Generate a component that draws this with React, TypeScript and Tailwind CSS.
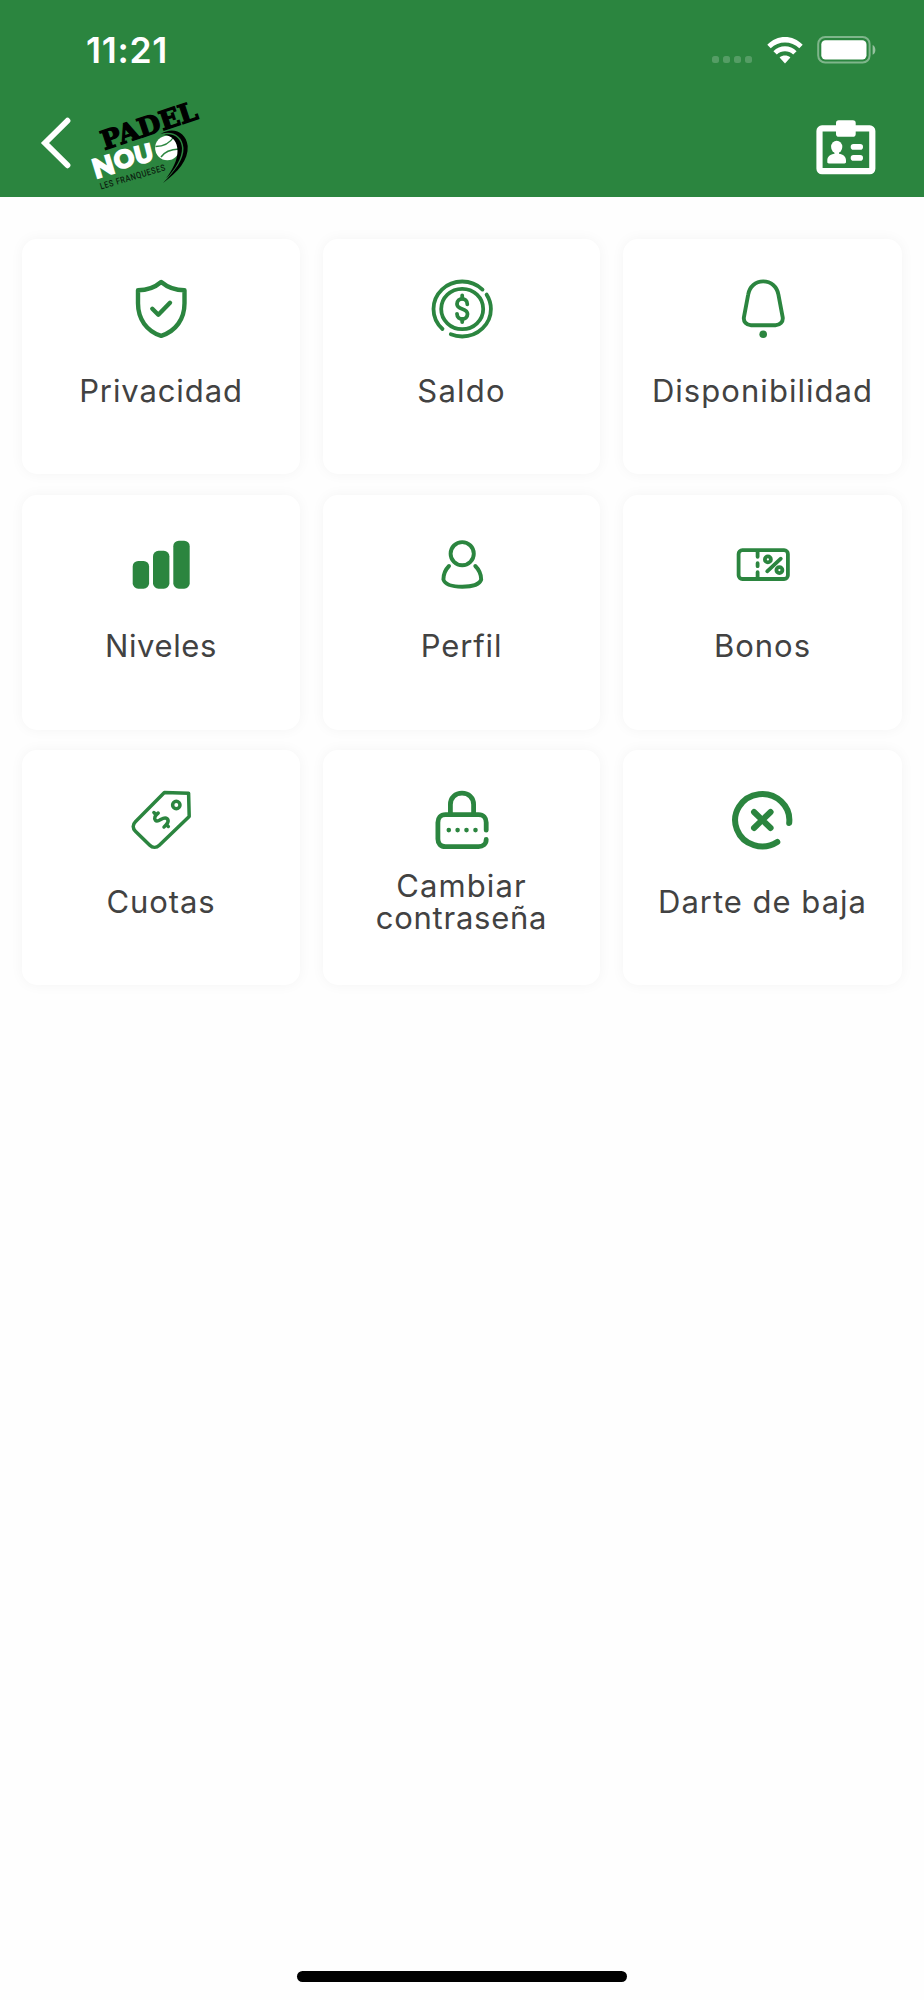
import React from "react";

interface MenuItem {
    label: string;
    lines: { text: string; tracking: string }[];
    icon: React.ReactNode;
}

interface IconProps {
    children: React.ReactNode;
    stroke?: number;
}

const Icon: React.FC<IconProps> = ({ children, stroke = 3.9 }) => (
    <svg
        width="60"
        height="60"
        viewBox="0 0 60 60"
        fill="none"
        stroke="currentColor"
        strokeWidth={stroke}
        strokeLinecap="round"
        strokeLinejoin="round"
        className="overflow-visible"
    >
        {children}
    </svg>
);

const menuItems: MenuItem[] = [
    {
        label: "Privacidad",
        lines: [{ text: "Privacidad", tracking: "tracking-[0.9px]" }],
        icon: (
            <Icon stroke={4.4}>
                <path d="M30.2 3C24 8.3 16.5 11.3 7 11.3V24.3C7 40 15.5 52 30.2 56.9C45 52 53.5 40 53.5 24.3V11.3C44 11.3 36.5 8.3 30.2 3Z" />
                <path d="M21.3 29.8L27.3 35.7L39 23.8" />
            </Icon>
        ),
    },
    {
        label: "Saldo",
        lines: [{ text: "Saldo", tracking: "tracking-[1.2px]" }],
        icon: (
            <Icon stroke={3.8}>
                <path d="M10.5 50A28.7 27.5 0 0 1 1.5 30A28.7 27.5 0 0 1 30.2 2.5A28.7 27.5 0 0 1 50.5 10.6" />
                <path d="M54.6 15.6A28.7 27.5 0 0 1 58.9 30A28.7 27.5 0 0 1 30.2 57.5A28.7 27.5 0 0 1 18.8 55.2" />
                <ellipse cx="30.2" cy="30" rx="21" ry="20.2" />
                <path d="M35.3 25.3C35.3 18 25 18 25 25C25 31.5 35.5 28.5 35.5 35C35.5 41.8 25 41.8 25 34.8" />
                <path d="M30.2 16.5V19.5M30.2 40V43" />
            </Icon>
        ),
    },
    {
        label: "Disponibilidad",
        lines: [{ text: "Disponibilidad", tracking: "tracking-[1.05px]" }],
        icon: (
            <Icon>
                <path d="M30.2 2.4C22.500 2.400 16.500 7.500 15.200 15.500L10.900 38.300C10.300 42.800 13.500 46.200 18 46.200H42.500C47 46.200 50.300 42.800 49.700 38.300L45.400 15.500C44 7.500 38 2.400 30.200 2.400Z" />
                <circle cx="30.2" cy="55.3" r="3.8" fill="currentColor" stroke="none" />
            </Icon>
        ),
    },
    {
        label: "Niveles",
        lines: [{ text: "Niveles", tracking: "tracking-[0.6px]" }],
        icon: (
            <Icon>
                <g fill="currentColor" stroke="none">
                    <rect x="1.7" y="26" width="16.4" height="27.7" rx="5.5" />
                    <rect x="22" y="15.8" width="16.4" height="37.9" rx="5.5" />
                    <rect x="42.3" y="5.7" width="16.4" height="48" rx="5.5" />
                </g>
            </Icon>
        ),
    },
    {
        label: "Perfil",
        lines: [{ text: "Perfil", tracking: "tracking-[0.9px]" }],
        icon: (
            <Icon>
                <circle cx="30.2" cy="18.7" r="11.6" />
                <path d="M17 31C13.5 34.5 11.4 39 11.4 44.5C13 49.3 20.5 51.7 30.2 51.7C40 51.7 47.5 49.3 49.2 44.5C49.2 39 46.8 34.5 43.3 31" />
            </Icon>
        ),
    },
    {
        label: "Bonos",
        lines: [{ text: "Bonos", tracking: "tracking-[1px]" }],
        icon: (
            <Icon stroke={3.8}>
                <rect x="5.6" y="15.2" width="49.3" height="28.8" rx="3.8" />
                <path d="M24.600 17V21.800M24.600 28.200V31.200M24.600 37.200V42" />
                <path d="M47.800 23.700L34.200 36.300" />
                <circle cx="34.9" cy="24.4" r="3" />
                <circle cx="46.4" cy="35.1" r="3" />
            </Icon>
        ),
    },
    {
        label: "Cuotas",
        lines: [{ text: "Cuotas", tracking: "tracking-[0.9px]" }],
        icon: (
            <Icon stroke={3.5}>
                <path d="M33.4 2.6L57.6 3.2L58.2 26.4L28.3 55.2C25.5 57.9 21.5 57.9 18.8 55.2L4.4 41.2C1.5 38.3 1.5 34.5 4.4 31.7Z" />
                <circle cx="45.3" cy="15" r="3.7" />
                <path d="M27.2 23C24 25.5 22.7 28.5 24.4 30.3C27.5 33.5 32 25.5 36 28.6C38.5 30.8 36.5 34 33 37" />
                <path d="M22.9 22.5L24.8 24.4M35.7 35L37.3 36.5" />
            </Icon>
        ),
    },
    {
        label: "Cambiar contraseña",
        lines: [
            { text: "Cambiar", tracking: "tracking-[1.1px]" },
            { text: "contraseña", tracking: "tracking-[0.75px]" },
        ],
        icon: (
            <Icon stroke={4.8}>
                <path d="M54.2 40.2V32.5C54.2 28 51.5 24.7 46.5 24.7H13.5C8.5 24.7 5.9 28 5.9 32.5V49C5.9 53.5 8.5 56.6 13.5 56.6H46.5C51 56.6 54.2 54 54.2 49.5" />
                <path d="M18.4 24V14.5C18.4 7.5 23.5 3.2 30 3.2C36.5 3.2 41.6 7.5 41.6 14.5V24" />
                <g fill="currentColor" stroke="none">
                    <circle cx="16.8" cy="40.1" r="2.3" />
                    <circle cx="25.6" cy="40.1" r="2.3" />
                    <circle cx="34.5" cy="40.1" r="2.3" />
                    <circle cx="43.5" cy="40.1" r="2.3" />
                </g>
            </Icon>
        ),
    },
    {
        label: "Darte de baja",
        lines: [{ text: "Darte de baja", tracking: "tracking-[1px]" }],
        icon: (
            <Icon stroke={6}>
                <path d="M56.2 33A27.1 26.2 0 1 0 44.3 52" />
                <path d="M21 22L37.6 38M37.6 22L21 38" />
            </Icon>
        ),
    },
];

const ClubLogo = () => (
    <svg width="116" height="92" viewBox="88 100 116 92" className="overflow-visible">
        <text
            transform="translate(104.5 150) rotate(-18.5)"
            fontFamily="DejaVu Serif"
            fontWeight="bold"
            fontSize="26"
            textLength="100"
            lengthAdjust="spacingAndGlyphs"
            stroke="#000"
            strokeWidth="1.3"
        >
            PADEL
        </text>
        <g fontFamily="Lato" fontWeight="900" fill="#fff" stroke="#fff" strokeWidth="2">
            <text transform="translate(96 178.5) rotate(-17)" fontSize="26" textLength="21" lengthAdjust="spacingAndGlyphs">N</text>
            <text transform="translate(117 170) rotate(-17)" fontSize="24" textLength="20" lengthAdjust="spacingAndGlyphs">O</text>
            <text transform="translate(137 164.5) rotate(-14)" fontSize="24" textLength="18" lengthAdjust="spacingAndGlyphs">U</text>
        </g>
        <text
            transform="translate(101 189.5) rotate(-16.5)"
            fontFamily="Roboto"
            fontWeight="500"
            fontSize="9"
            letterSpacing="0.6"
            textLength="68"
            lengthAdjust="spacingAndGlyphs"
            fill="#0c1f10"
        >
            LES FRANQUESES
        </text>
        {/* ball with its seams */}
        <circle cx="167.3" cy="148" r="12.2" fill="#fff" />
        <path d="M155.5 146.5Q168 146.5 174 136.5M161 157Q166 149.5 179 149" fill="none" stroke="#2b853f" strokeWidth="1.4" />
        {/* swoosh */}
        <path d="M160.5 134C172 126.5 186 131 187.7 146C188.5 160 178 172 163 183C175 171 184 159 183.5 148C182.5 135 172 130 160.5 134Z" />
        <path d="M164 134.5C175 132.5 181.5 139 182 148C182.3 158 175 170 166 178.5C173 169 177.5 160 177.5 151C177.5 142 173 136 164 134.5Z" />
    </svg>
);

const StatusBar = () => (
    <div className="flex h-[100px] items-center justify-between pl-[86px] pr-[48px]">
        <span className="mt-[1px] text-[35.5px] font-semibold leading-none tracking-[0.7px] text-white">11:21</span>
        <div className="flex items-center">
            <div className="mt-[19px] flex gap-[3.5px]">
                {[0, 1, 2, 3].map((dot) => (
                    <span key={dot} className="size-[7.5px] rounded-[2.5px] bg-white/20" />
                ))}
            </div>
            <svg width="36" height="27" viewBox="0 0 36 27" className="ml-[15px]" fill="#fff">
                <path d="M0.3 7.8C10 -2.6 26 -2.6 35.7 7.8L32.3 11.3C24.5 3.6 11.5 3.6 3.7 11.3Z" />
                <path d="M6.4 14.2C12.8 7.7 23.2 7.7 29.6 14.2L26.2 17.6C21.5 13.2 14.5 13.2 9.8 17.6Z" />
                <path d="M12.6 20.5C15.8 17.9 20.2 17.9 23.4 20.5L18 26.6Z" />
            </svg>
            <svg width="59" height="28" viewBox="0 0 59 28" className="ml-[14px]">
                <rect x="1.2" y="1" width="51.4" height="25.6" rx="7" fill="none" stroke="#fff" strokeOpacity="0.4" strokeWidth="2" />
                <rect x="4.3" y="4.3" width="45.2" height="19.2" rx="4.2" fill="#fff" />
                <path d="M55.6 9C59.3 10.5 59.3 17.5 55.6 18.8Z" fill="#fff" fillOpacity="0.5" />
            </svg>
        </div>
    </div>
);

const Header = () => (
    <header className="h-[197px] bg-[#2b853f]">
        <StatusBar />
        <div className="flex h-[97px] items-start justify-between pl-[40px] pr-[48px]">
            <div className="flex items-start">
                <svg width="32" height="54" viewBox="40 116 32 54" className="mt-[16px]" fill="none" stroke="#fff" strokeWidth="5.8">
                    <path d="M67.5 120.7L45 143L67.5 165.3" strokeLinecap="round" />
                </svg>
                <div className="ml-[16px]">
                    <ClubLogo />
                </div>
            </div>
            {/* member card */}
            <svg width="60" height="55" viewBox="816 120 60 55" className="mt-[20px]" fill="#fff">
                <rect x="819.5" y="128.4" width="52.8" height="42.8" rx="2.5" fill="none" stroke="#fff" strokeWidth="6.2" />
                <rect x="836" y="120.3" width="19.7" height="16.4" rx="2.8" />
                <ellipse cx="836.7" cy="147" rx="5.6" ry="6.2" />
                <path d="M834.5 151H839V153.8C843 154.3 846 156.5 846 160.5V162C846 163 845.4 163.4 844.5 163.4H828.8C827.9 163.4 827.3 163 827.3 162V160.5C827.3 156.5 830.5 154.3 834.5 153.8Z" />
                <rect x="850.7" y="144" width="12.3" height="5.7" rx="2.8" />
                <rect x="850.7" y="155" width="12.3" height="5.7" rx="2.8" />
            </svg>
        </div>
    </header>
);

const MenuCard: React.FC<{ item: MenuItem }> = ({ item }) => (
    <button
        aria-label={item.label}
        className="flex h-[235px] flex-col items-center rounded-[15px] bg-white pt-[40px] text-[#2b853f] shadow-[0_0_14px_rgba(0,0,0,0.045)]"
    >
        {item.icon}
        <div className="mt-[17.5px] flex h-[68px] flex-col items-center justify-center text-[31px] leading-[32px] text-[#424242]">
            {item.lines.map((line) => (
                <span key={line.text} className={`whitespace-nowrap ${line.tracking}`}>
                    {line.text}
                </span>
            ))}
        </div>
    </button>
);

const App = () => {
    return (
        <div className="flex h-[2000px] w-[924px] flex-col bg-[#fefefe] font-['Inter',sans-serif]">
            <Header />
            <main className="grid grid-cols-[278px_277px_279px] gap-x-[23px] gap-y-[20.5px] px-[22px] pt-[42px]">
                {menuItems.map((item) => (
                    <MenuCard key={item.label} item={item} />
                ))}
            </main>
            <div className="mx-auto mt-auto mb-[18px] h-[11px] w-[330px] rounded-full bg-black" />
        </div>
    );
};

export default App;
